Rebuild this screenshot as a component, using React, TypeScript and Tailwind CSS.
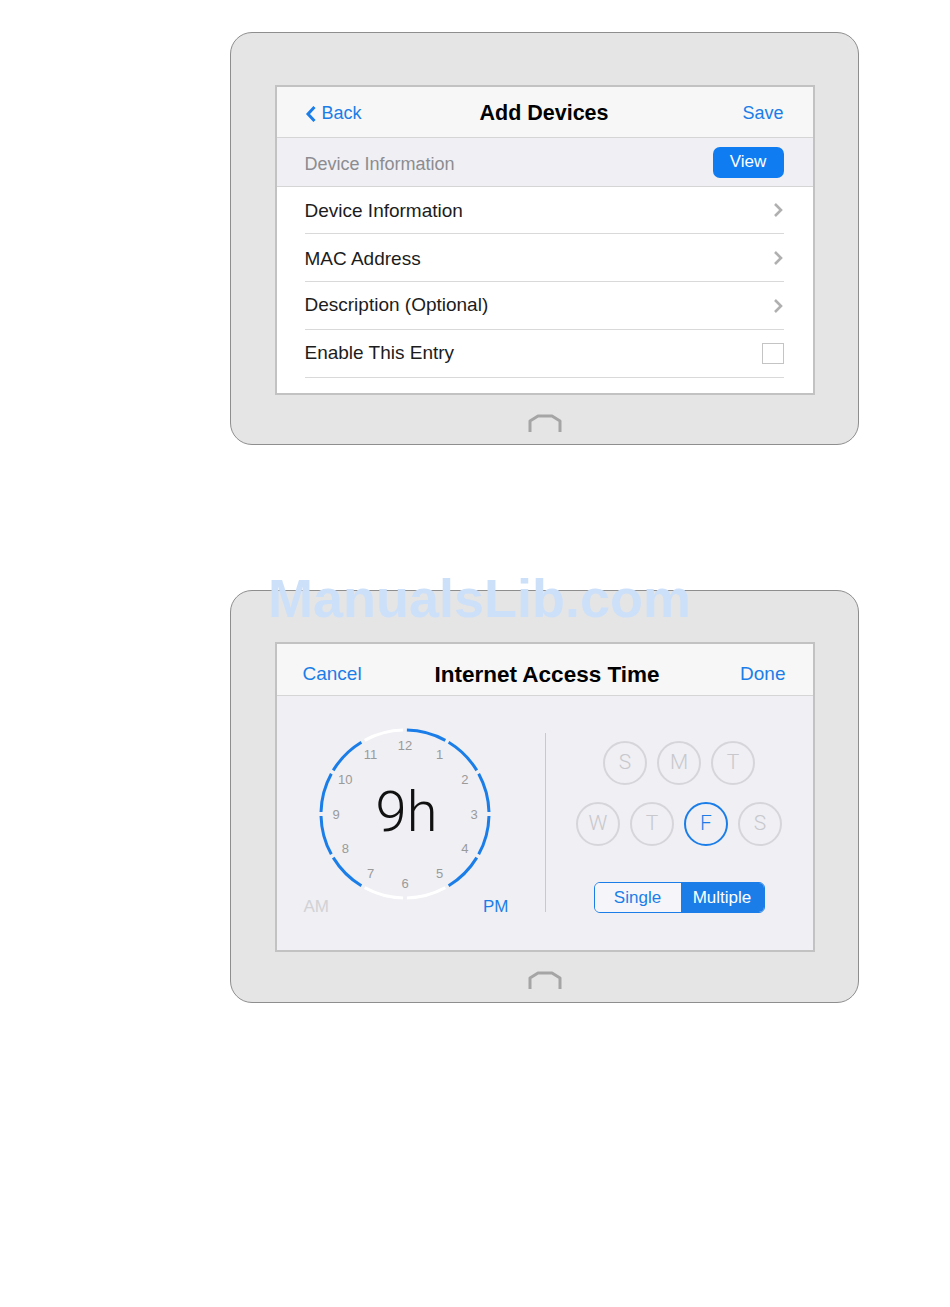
import React from 'react';

const BLUE = '#1b7ee8';

// angles in degrees, clockwise from 12 o'clock
function arcPath(cx: number, cy: number, r: number, a0: number, a1: number) {
  const rad = (a: number) => (a * Math.PI) / 180;
  const x0 = cx + r * Math.sin(rad(a0));
  const y0 = cy - r * Math.cos(rad(a0));
  const x1 = cx + r * Math.sin(rad(a1));
  const y1 = cy - r * Math.cos(rad(a1));
  return `M ${x0.toFixed(2)} ${y0.toFixed(2)} A ${r} ${r} 0 0 1 ${x1.toFixed(2)} ${y1.toFixed(2)}`;
}

// hour segments that are switched on (0 = 12..1)
const ACTIVE = [0, 1, 2, 3, 4, 7, 8, 9, 10];

function HomeButton() {
  return (
    <svg width="36" height="20" viewBox="0 0 36 20" className="mt-[18px]">
      <path
        d="M3 19 V8 L11 3 H25 L33 8 V19"
        fill="none"
        stroke="#a5a5a5"
        strokeWidth="3"
        strokeLinejoin="round"
      />
    </svg>
  );
}

function Tablet({ children, top }: { children: React.ReactNode; top: string }) {
  return (
    <div className={`w-[629px] h-[413px] rounded-[22px] border border-[#8e8e8e] bg-[#e5e5e5] flex flex-col items-center ${top}`}>
      <div className="w-[540px] h-[310px] border-2 border-[#c2c2c2] bg-white overflow-hidden">
        {children}
      </div>
      <HomeButton />
    </div>
  );
}

function Chevron() {
  return (
    <svg width="12" height="16" viewBox="0 0 12 16">
      <path d="M3 2 L9 8 L3 14" fill="none" stroke="#b0b0b0" strokeWidth="2.6" />
    </svg>
  );
}

function AddDevices() {
  const rows = ['Device Information', 'MAC Address', 'Description (Optional)', 'Enable This Entry'];
  return (
    <div className="flex flex-col h-full">
      <div className="h-[51px] shrink-0 bg-[#f7f7f7] border-b border-[#d5d5d5] grid grid-cols-[1fr_auto_1fr] items-center pt-[3px] pl-[28px] pr-[29px]">
        <div className="flex items-center gap-[5px] text-[18px]" style={{ color: BLUE }}>
          <svg width="12" height="18" viewBox="0 0 12 18">
            <path d="M9.5 2 L3 9 L9.5 16" fill="none" stroke={BLUE} strokeWidth="3" />
          </svg>
          <span>Back</span>
        </div>
        <div className="text-[21.5px] font-bold text-black">Add Devices</div>
        <div className="text-[18px] text-right" style={{ color: BLUE }}>Save</div>
      </div>
      <div className="h-[49px] shrink-0 bg-[#efeff4] border-b border-[#d5d5d5] flex items-center justify-between pl-[28px] pr-[29px]">
        <span className="text-[18px] text-[#8c8c90] mt-[4px]">Device Information</span>
        <button className="w-[71px] h-[31px] rounded-[7px] bg-[#0f7cf2] text-white text-[17px]">View</button>
      </div>
      <ul className="pl-[28px] pr-[29px]">
        {rows.map((r, i) => (
          <li
            key={r}
            className={`${i === 0 ? 'h-[47px]' : 'h-[48px]'} border-b border-[#d9d9d9] flex items-center justify-between text-[19px] text-[#1c1c1c]`}
          >
            <span className={i < 2 ? 'mt-[3px]' : ''}>{r}</span>
            {i < 3 ? <Chevron /> : <span className="w-[22px] h-[21px] border border-[#c4c4c4] bg-white" />}
          </li>
        ))}
      </ul>
    </div>
  );
}

function Clock() {
  const cx = 87;
  const cy = 87;
  const r = 84;
  const gap = 1.3;
  return (
    <svg width="174" height="174" viewBox="0 0 174 174" className="ml-[14px]">
      {Array.from({ length: 12 }).map((_, i) => (
        <path
          key={i}
          d={arcPath(cx, cy, r, i * 30 + gap, (i + 1) * 30 - gap)}
          fill="none"
          stroke={ACTIVE.includes(i) ? BLUE : '#ffffff'}
          strokeWidth="3"
        />
      ))}
      {Array.from({ length: 12 }).map((_, i) => {
        const h = i === 0 ? 12 : i;
        const a = (i * 30 * Math.PI) / 180;
        return (
          <text
            key={h}
            x={cx + 69 * Math.sin(a)}
            y={cy - 69 * Math.cos(a)}
            textAnchor="middle"
            dominantBaseline="central"
            fontSize="13"
            fill="#9a9a9a"
            fontFamily="'Liberation Sans', Arial, sans-serif"
          >
            {h}
          </text>
        );
      })}
      <text
        x={cx + 1.5}
        y={104}
        textAnchor="middle"
        fontSize="56"
        fontWeight="300"
        fill="#111"
        fontFamily="Roboto, 'Liberation Sans', sans-serif"
      >
        9h
      </text>
    </svg>
  );
}

function Day({ l, on }: { l: string; on?: boolean }) {
  return (
    <div
      className={`w-[44px] h-[44px] rounded-full border-2 flex items-center justify-center text-[21px] font-light ${
        on ? 'border-[#1b7ee8] text-[#1b7ee8]' : 'border-[#d6d6da] text-[#c8c8cc]'
      }`}
      style={{ fontFamily: "Roboto, 'Liberation Sans', sans-serif" }}
    >
      {l}
    </div>
  );
}

function AccessTime() {
  return (
    <div className="flex flex-col h-full">
      <div className="h-[52px] shrink-0 bg-[#f7f7f7] border-b border-[#d5d5d5] grid grid-cols-[1fr_auto_1fr] items-center pt-[10px] pl-[26px] pr-[27px]">
        <div className="text-[19px]" style={{ color: BLUE }}>Cancel</div>
        <div className="text-[22.5px] font-bold text-black ml-[6px]">Internet Access Time</div>
        <div className="text-[19px] text-right" style={{ color: BLUE }}>Done</div>
      </div>
      <div className="flex-1 bg-[#efeff4] flex">
        <div className="w-[268px] shrink-0 pl-[27px] pt-[31px] flex flex-col">
          <Clock />
          <div className="w-[205px] -mt-[3px] flex justify-between text-[17px] leading-[18px]">
            <span className="text-[#d2d2d6]">AM</span>
            <span style={{ color: BLUE }}>PM</span>
          </div>
        </div>
        <div className="w-px h-[179px] mt-[37px] bg-[#c9c9cc]" />
        <div className="flex-1 flex flex-col items-center pt-[45px]">
          <div className="flex gap-[10px]">
            <Day l="S" />
            <Day l="M" />
            <Day l="T" />
          </div>
          <div className="flex gap-[10px] mt-[17px]">
            <Day l="W" />
            <Day l="T" />
            <Day l="F" on />
            <Day l="S" />
          </div>
          <div className="mt-[36px] w-[171px] h-[31px] rounded-[6px] border border-[#1b7ee8] overflow-hidden flex text-[17px]">
            <div className="w-[86px] bg-[#f6f6fa] flex items-center justify-center" style={{ color: BLUE }}>Single</div>
            <div className="flex-1 bg-[#1b7ee8] text-white flex items-center justify-center">Multiple</div>
          </div>
        </div>
      </div>
    </div>
  );
}

export default function App() {
  return (
    <div className="relative w-[950px] h-[1307px] bg-white pt-[32px] pl-[230px]" style={{ fontFamily: "'Liberation Sans', Arial, sans-serif" }}>
      <Tablet top="pt-[52px]">
        <AddDevices />
      </Tablet>
      <div className="mt-[145px]">
        <Tablet top="pt-[51px]">
          <AccessTime />
        </Tablet>
      </div>
      <div className="absolute left-[268px] top-[571px] text-[54px] leading-none font-bold text-[#cde0f9] select-none">
        ManualsLib.com
      </div>
    </div>
  );
}
